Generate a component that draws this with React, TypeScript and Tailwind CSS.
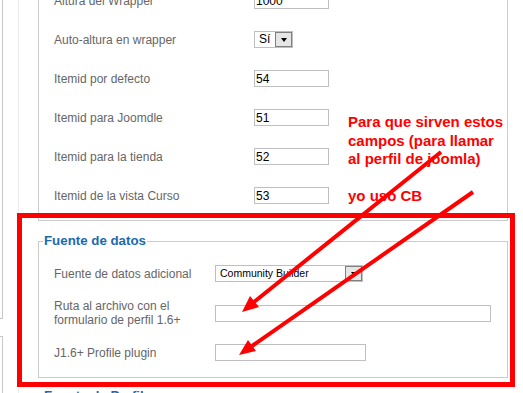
import type { ReactNode } from "react";

const labelCls = "text-[12px] leading-[14px] text-[#666]";

function TextBox({ value = "", w }: { value?: string; w: string }) {
    return (
        <input
            readOnly
            value={value}
            className={`h-[17px] ${w} border border-[#bfbfbf] bg-white px-[1px] text-[12px] leading-[15px] text-black outline-none`}
        />
    );
}

function FakeSelect({ value, w, size }: { value: string; w: string; size: string }) {
    return (
        <div className={`flex h-[17px] ${w} items-stretch border border-[#bfbfbf] bg-white`}>
            <span className={`flex-1 truncate pl-[4px] ${size} leading-[15px] text-black`}>{value}</span>
            <span className="flex w-[17px] items-center justify-center border border-[#7f7f7f] bg-[#e6e6e6]">
                <span className="h-0 w-0 border-x-[3.5px] border-t-[4px] border-x-transparent border-t-black" />
            </span>
        </div>
    );
}

function Row({ label, labelW, children }: { label: ReactNode; labelW: string; children: ReactNode }) {
    return (
        <div className="flex items-center">
            <div className={`${labelW} shrink-0 ${labelCls}`}>{label}</div>
            {children}
        </div>
    );
}

export default function App() {
    return (
        <div className="relative h-[393px] w-[523px] overflow-hidden bg-white font-['Liberation_Sans',Arial,sans-serif]">
            <div className="flex h-full">
                {/* left panel edge */}
                <div className="flex w-[18px] shrink-0 flex-col">
                    <div className="h-[338px] w-[3px] border-b border-r border-[#c8c8c8]" />
                    <div className="mt-[17px] h-[60px] w-[3px] border-r border-t border-[#c8c8c8]" />
                </div>

                <div className="flex-1 border-l border-[#ececec] pl-[19px]">
                    <div className="w-[470px]">
                        {/* upper fieldset, top scrolled out of view */}
                        <div className="-mt-[8px] flex flex-col gap-[22px] border-x border-b border-[#cccccc] pb-[16px] pl-[15px]">
                            <Row label="Altura del Wrapper" labelW="w-[200px]">
                                <TextBox value="1000" w="w-[75px]" />
                            </Row>
                            <Row label="Auto-altura en wrapper" labelW="w-[200px]">
                                <FakeSelect value="Sí" w="w-[39px]" size="text-[12px]" />
                            </Row>
                            <Row label="Itemid por defecto" labelW="w-[200px]">
                                <TextBox value="54" w="w-[75px]" />
                            </Row>
                            <Row label="Itemid para Joomdle" labelW="w-[200px]">
                                <TextBox value="51" w="w-[75px]" />
                            </Row>
                            <Row label="Itemid para la tienda" labelW="w-[200px]">
                                <TextBox value="52" w="w-[75px]" />
                            </Row>
                            <Row label="Itemid de la vista Curso" labelW="w-[200px]">
                                <TextBox value="53" w="w-[75px]" />
                            </Row>
                        </div>

                        <fieldset className="mt-[12px] border border-[#cccccc] pb-[16px] pl-[4px] pt-[16px]">
                            <legend className="px-[1px] text-[13.3px] font-bold leading-4 text-[#1b6aae]">
                                Fuente de datos
                            </legend>
                            <div className="flex flex-col gap-[17px] pl-[11px]">
                                <Row label="Fuente de datos adicional" labelW="w-[161px]">
                                    <FakeSelect value="Community Builder" w="w-[148px]" size="text-[10.5px]" />
                                </Row>
                                <Row
                                    label={
                                        <>
                                            Ruta al archivo con el
                                            <br />
                                            formulario de perfil 1.6+
                                        </>
                                    }
                                    labelW="w-[161px]"
                                >
                                    <TextBox w="w-[276px]" />
                                </Row>
                                <Row label="J1.6+ Profile plugin" labelW="w-[161px]">
                                    <TextBox w="w-[151px]" />
                                </Row>
                            </div>
                        </fieldset>

                        <fieldset className="mt-[10px] border border-[#cccccc] pl-[4px]">
                            <legend className="px-[1px] text-[13.3px] font-bold leading-4 text-[#1b6aae]">
                                Fuente de Perfil
                            </legend>
                        </fieldset>
                    </div>
                </div>
            </div>

            {/* annotation: red frame */}
            <div className="pointer-events-none absolute left-[17px] top-[213px] h-[174px] w-[498px] border-[5px] border-[#ff0000]" />

            {/* annotation: note */}
            <div className="pointer-events-none absolute left-[348px] top-[113px] text-[15px] font-bold leading-[18.5px] text-[#ff0000]">
                Para que sirven estos
                <br />
                campos (para llamar
                <br />
                al perfil de joomla)
                <br />
                <br />
                yo uso CB
            </div>

            {/* annotation: arrows */}
            <svg className="pointer-events-none absolute left-0 top-0" width="523" height="393" viewBox="0 0 523 393">
                <line x1="441" y1="152" x2="254" y2="302" stroke="#ff0000" strokeWidth="4" />
                <polygon points="242,312 259,307 250,296" fill="#ff0000" />
                <line x1="473" y1="192" x2="252" y2="346" stroke="#ff0000" strokeWidth="4" />
                <polygon points="239,355 256,351 248,340" fill="#ff0000" />
            </svg>
        </div>
    );
}
